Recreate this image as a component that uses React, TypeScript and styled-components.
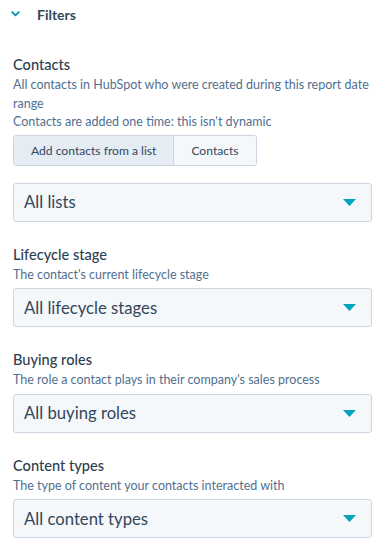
import { VFC } from "react";
import styled, { createGlobalStyle } from "styled-components";

const GlobalStyle = createGlobalStyle`
  body {
    margin: 0;
    background: #fff;
    font-family: Lato, "Open Sans", sans-serif;
    color: #33475b;
  }
`;

const selects = [
  {
    label: "Lifecycle stage",
    help: "The contact's current lifecycle stage",
    value: "All lifecycle stages",
  },
  {
    label: "Buying roles",
    help: "The role a contact plays in their company's sales process",
    value: "All buying roles",
  },
  {
    label: "Content types",
    help: "The type of content your contacts interacted with",
    value: "All content types",
  },
];

const Caret: VFC = () => (
  <svg width="13" height="7" viewBox="0 0 13 7">
    <path d="M0 0 L13 0 L6.5 7 Z" fill="#00a4bd" />
  </svg>
);

const Select: VFC<{ value: string }> = ({ value }) => (
  <SSelect>
    <span>{value}</span>
    <Caret />
  </SSelect>
);

const App: VFC = () => {
  return (
    <>
      <GlobalStyle />
      <SPanel>
        <SHeader>
          <svg width="9" height="6" viewBox="0 0 9 6">
            <path
              d="M1.2 1.2 L4.5 4.4 L7.8 1.2"
              fill="none"
              stroke="#0091ae"
              strokeWidth="1.8"
              strokeLinecap="round"
              strokeLinejoin="round"
            />
          </svg>
          <STitle>Filters</STitle>
        </SHeader>

        <SField first>
          <SLabel>Contacts</SLabel>
          <SHelp>
            All contacts in HubSpot who were created during this report date
            range
            <br />
            Contacts are added one time: this isn't dynamic
          </SHelp>
          <SToggle>
            <SToggleButton active>Add contacts from a list</SToggleButton>
            <SToggleButton>Contacts</SToggleButton>
          </SToggle>
          <SSpacer />
          <Select value="All lists" />
        </SField>

        {selects.map((s) => (
          <SField key={s.label}>
            <SLabel>{s.label}</SLabel>
            <SHelp>{s.help}</SHelp>
            <Select value={s.value} />
          </SField>
        ))}
      </SPanel>
    </>
  );
};

export default App;

const SPanel = styled.div`
  padding: 0 15px 0 13px;
  display: flex;
  flex-direction: column;
`;

const SHeader = styled.div`
  height: 28px;
  display: flex;
  align-items: center;
  margin-left: -2px;
  > svg {
    margin-right: 17px;
  }
`;

const STitle = styled.h3`
  margin: 0;
  font-size: 14px;
  font-weight: 700;
  color: #33475b;
`;

const SField = styled.div<{ first?: boolean }>`
  display: flex;
  flex-direction: column;
  margin-top: ${(p) => (p.first ? "26px" : "22px")};
`;

const SLabel = styled.div`
  font-size: 14.6px;
  font-weight: 500;
  line-height: 21px;
  color: #2d3e50;
`;

const SHelp = styled.div`
  font-size: 12.5px;
  line-height: 18.5px;
  color: #516f90;
  margin-top: 1px;
  margin-bottom: 4px;
`;

const SToggle = styled.div`
  display: flex;
  align-self: flex-start;
  margin-top: -1px;
  border: 1px solid #cbd6e2;
  border-radius: 3px;
  overflow: hidden;
`;

const SToggleButton = styled.div<{ active?: boolean }>`
  height: 29px;
  display: flex;
  align-items: center;
  padding: 0 17px;
  font-size: 12.1px;
  color: #33475b;
  background: ${(p) => (p.active ? "#e5ecf3" : "#f5f8fa")};
  & + & {
    border-left: 1px solid #cbd6e2;
  }
`;

const SSpacer = styled.div`
  height: 17px;
`;

const SSelect = styled.div`
  height: 37px;
  display: flex;
  align-items: center;
  justify-content: space-between;
  padding: 0 15px 0 10px;
  background: #f5f8fa;
  border: 1px solid #cbd6e2;
  border-radius: 3px;
  font-size: 16.7px;
  color: #33475b;
`;
